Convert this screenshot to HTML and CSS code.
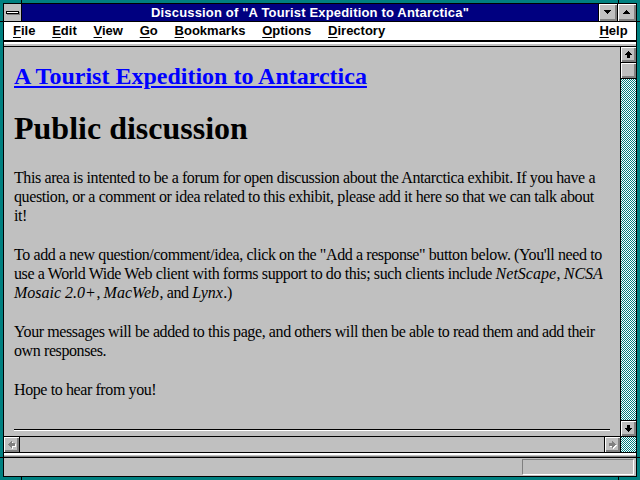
FILE: index.html
```html
<!DOCTYPE html>
<html>
<head>
<meta charset="utf-8">
<title>Discussion of "A Tourist Expedition to Antarctica"</title>
<link rel="stylesheet" href="styles.css">
</head>
<body>
<div class="screen">
  <span class="mark mk-t1"></span><span class="mark mk-t2"></span>
  <span class="mark mk-b1"></span><span class="mark mk-b2"></span>
  <span class="mark mk-l1"></span><span class="mark mk-l2"></span>
  <span class="mark mk-r1"></span><span class="mark mk-r2"></span>
  <div class="win">
    <div class="titlebar">
      <div class="sysmenu"><div class="sysbar"></div></div>
      <div class="caption">Discussion of "A Tourist Expedition to Antarctica"</div>
      <div class="tbtn"><svg width="7" height="4" viewBox="0 0 7 4" shape-rendering="crispEdges"><path d="M0 0H7V1H6V2H5V3H4V4H3V3H2V2H1V1H0Z" fill="#000"/></svg></div>
      <div class="tbtn"><svg width="7" height="4" viewBox="0 0 7 4" shape-rendering="crispEdges"><path d="M3 0H4V1H5V2H6V3H7V4H0V3H1V2H2V1H3Z" fill="#000"/></svg></div>
    </div>
    <div class="menubar">
      <span class="mi"><u>F</u>ile</span>
      <span class="mi"><u>E</u>dit</span>
      <span class="mi"><u>V</u>iew</span>
      <span class="mi"><u>G</u>o</span>
      <span class="mi"><u>B</u>ookmarks</span>
      <span class="mi"><u>O</u>ptions</span>
      <span class="mi"><u>D</u>irectory</span>
      <span class="mi help"><u>H</u>elp</span>
    </div>
    <div class="divider"></div>
    <div class="main">
      <div class="doc">
        <h2 class="doctitle"><a href="#">A Tourist Expedition to Antarctica</a></h2>
        <h1 class="heading">Public discussion</h1>
        <p class="para">This area is intented to be a forum for open discussion about the Antarctica exhibit. If you have a question, or a comment or idea related to this exhibit, please add it here so that we can talk about it!</p>
        <p class="para"><span>To add a new question/comment/idea, click on the "Add a response" button below. (You'll need to</span> <span>use a World Wide Web client with forms support to do this; such clients include</span> <i class="em">NetScape</i>, <i class="em">NCSA</i> <i class="em">Mosaic 2.0+</i>, <i class="em">MacWeb</i>, and <i class="em">Lynx</i>.)</p>
        <p class="para">Your messages will be added to this page, and others will then be able to read them and add their own responses.</p>
        <p class="para">Hope to hear from you!</p>
        <hr class="rule">
      </div>
      <div class="vscroll">
        <div class="sbtn up"><svg width="7" height="7" viewBox="0 0 7 7" shape-rendering="crispEdges"><path d="M3 0H4V1H5V2H6V3H7V4H5V7H2V4H0V3H1V2H2V1H3Z" fill="#000"/></svg></div>
        <div class="sbtn thumb"></div>
        <div class="track"></div>
        <div class="sbtn down"><svg width="7" height="7" viewBox="0 0 7 7" shape-rendering="crispEdges"><path d="M3 7H4V6H5V5H6V4H7V3H5V0H2V3H0V4H1V5H2V6H3Z" fill="#000"/></svg></div>
      </div>
    </div>
    <div class="hscroll">
      <div class="sbtn left"><svg width="8" height="8" viewBox="0 0 8 8" shape-rendering="crispEdges"><path transform="translate(1 1)" d="M0 3V4H1V5H2V6H3V7H4V5H7V2H4V0H3V1H2V2H1V3Z" fill="#fff"/><path d="M0 3V4H1V5H2V6H3V7H4V5H7V2H4V0H3V1H2V2H1V3Z" fill="#808080"/></svg></div>
      <div class="htrack"></div>
      <div class="sbtn right"><svg width="8" height="8" viewBox="0 0 8 8" shape-rendering="crispEdges"><path transform="translate(1 1)" d="M7 3V4H6V5H5V6H4V7H3V5H0V2H3V0H4V1H5V2H6V3Z" fill="#fff"/><path d="M7 3V4H6V5H5V6H4V7H3V5H0V2H3V0H4V1H5V2H6V3Z" fill="#808080"/></svg></div>
      <div class="corner"></div>
    </div>
    <div class="sep"></div>
    <div class="status"><div class="sbox"></div></div>
  </div>
</div>
</body>
</html>
```

FILE: styles.css
```css
html, body {
  margin: 0;
  padding: 0;
  background: #008080;
}
.screen {
  position: relative;
  width: 640px;
  height: 480px;
  box-sizing: border-box;
  padding: 3px;
  background: #008080;
  overflow: hidden;
}
.mark {
  position: absolute;
  background: #000;
}
.mk-t1, .mk-t2, .mk-b1, .mk-b2 { width: 1px; height: 3px; }
.mk-t1 { left: 21px; top: 0; }
.mk-t2 { left: 618px; top: 0; }
.mk-b1 { left: 21px; top: 477px; }
.mk-b2 { left: 618px; top: 477px; }
.mk-l1, .mk-l2, .mk-r1, .mk-r2 { width: 3px; height: 1px; }
.mk-l1 { left: 0; top: 21px; }
.mk-l2 { left: 0; top: 457px; }
.mk-r1 { left: 637px; top: 21px; }
.mk-r2 { left: 637px; top: 457px; }

.win {
  height: 474px;
  box-sizing: border-box;
  border: 1px solid #000;
  background: #c0c0c0;
  display: flex;
  flex-direction: column;
}

/* title bar */
.titlebar {
  height: 18px;
  box-sizing: border-box;
  border-bottom: 1px solid #000;
  display: flex;
  flex: none;
}
.sysmenu {
  width: 18px;
  box-sizing: border-box;
  border-right: 1px solid #000;
  background: #c0c0c0;
  display: flex;
  align-items: center;
  justify-content: center;
}
.sysbar {
  width: 11px;
  height: 1px;
  background: #fff;
  border: 1px solid #000;
  box-shadow: 1px 1px 0 #808080;
  margin-right: 1px;
}
.caption {
  flex: 1;
  background: #000080;
  color: #fff;
  font: bold 13px/17px "Liberation Sans", Arial, sans-serif;
  letter-spacing: 0.17px;
  text-align: center;
  white-space: nowrap;
  overflow: hidden;
}
.tbtn {
  width: 19px;
  box-sizing: border-box;
  border-left: 1px solid #000;
  background: #c0c0c0;
  box-shadow: inset 1px 1px 0 #fff, inset -1px -1px 0 #808080, inset -2px -2px 0 #808080;
  display: flex;
  align-items: center;
  justify-content: center;
}
.tbtn svg { display: block; margin: 0 1px 1px 0; }

/* menu bar */
.menubar {
  height: 20px;
  box-sizing: border-box;
  background: #fff;
  border-bottom: 2px solid #000;
  display: flex;
  padding-left: 0.6px;
  flex: none;
}
.mi {
  padding: 0 8.4px;
  font: bold 13px/18px "Liberation Sans", Arial, sans-serif;
  color: #000;
  white-space: nowrap;
}
.mi u { text-decoration: underline; text-underline-offset: 2px; }
.help { margin-left: auto; }

.divider {
  height: 5px;
  box-sizing: border-box;
  border-top: 2px solid #fff;
  border-bottom: 1px solid #000;
  background: #c0c0c0;
  flex: none;
}

/* content */
.main {
  height: 389px;
  display: flex;
  flex: none;
}
.doc {
  flex: 1;
  overflow: hidden;
  padding: 16px 15px 0 10px;
  font-family: "Liberation Serif", "Times New Roman", serif;
  color: #000;
}
.doctitle {
  margin: 0;
  font-size: 24px;
  line-height: 27px;
  font-weight: bold;
}
.doctitle a {
  color: #0000ff;
  text-decoration: underline;
}
.heading {
  margin: 20px 0 22px;
  font-size: 32px;
  line-height: 36px;
  font-weight: bold;
}
.para {
  margin: 0 0 20px;
  font-size: 16px;
  line-height: 19px;
  letter-spacing: -0.4px;
}
.em {
  letter-spacing: 0;
  padding-right: 0.5px;
}
.rule {
  margin: 30px -5px 0 0;
  height: 0;
  border: 0;
  border-top: 1px solid #000;
  border-bottom: 1px solid #fff;
}

/* scrollbars */
.sbtn {
  background: #c0c0c0;
  box-shadow: inset 1px 1px 0 #fff, inset -1px -1px 0 #808080, inset -2px -2px 0 #808080;
  display: flex;
  align-items: center;
  justify-content: center;
  box-sizing: border-box;
  flex: none;
}
.sbtn svg { display: block; }
.vscroll {
  width: 16px;
  box-sizing: border-box;
  border-left: 1px solid #000;
  display: flex;
  flex-direction: column;
  flex: none;
}
.vscroll .sbtn { height: 16px; }
.up, .thumb { border-bottom: 1px solid #000; }
.down { border-top: 1px solid #000; }
.up svg { margin: 0 1px 1px 0; }
.down svg { margin: 0 1px 0 0; }
.track, .corner {
  background-color: #008080;
  background-image:
    linear-gradient(45deg, #fff 25%, transparent 25%, transparent 75%, #fff 75%),
    linear-gradient(45deg, #fff 25%, transparent 25%, transparent 75%, #fff 75%);
  background-size: 2px 2px;
  background-position: 0 0, 1px 1px;
}
.track { flex: 1; }

.hscroll {
  height: 17px;
  box-sizing: border-box;
  border-top: 1px solid #000;
  border-bottom: 1px solid #000;
  display: flex;
  flex: none;
}
.left { width: 16px; border-right: 1px solid #000; }
.right { width: 16px; border-left: 1px solid #000; }
.left svg, .right svg { margin: 0 0 0 1px; }
.htrack { flex: 1; background: #c0c0c0; }
.corner {
  width: 16px;
  box-sizing: border-box;
  border-left: 1px solid #000;
  flex: none;
}

/* status bar */
.sep {
  height: 5px;
  flex: none;
  background: linear-gradient(#fff 0 2px, #c0c0c0 2px 3px, #808080 3px 4px, #000 4px 5px);
}
.status {
  height: 18px;
  flex: none;
  display: flex;
  justify-content: flex-end;
  background: #c0c0c0;
}
.sbox {
  width: 112px;
  height: 16px;
  box-sizing: border-box;
  margin: 1px 2px 0 0;
  border: 1px solid;
  border-color: #808080 #fff #fff #808080;
}
```
